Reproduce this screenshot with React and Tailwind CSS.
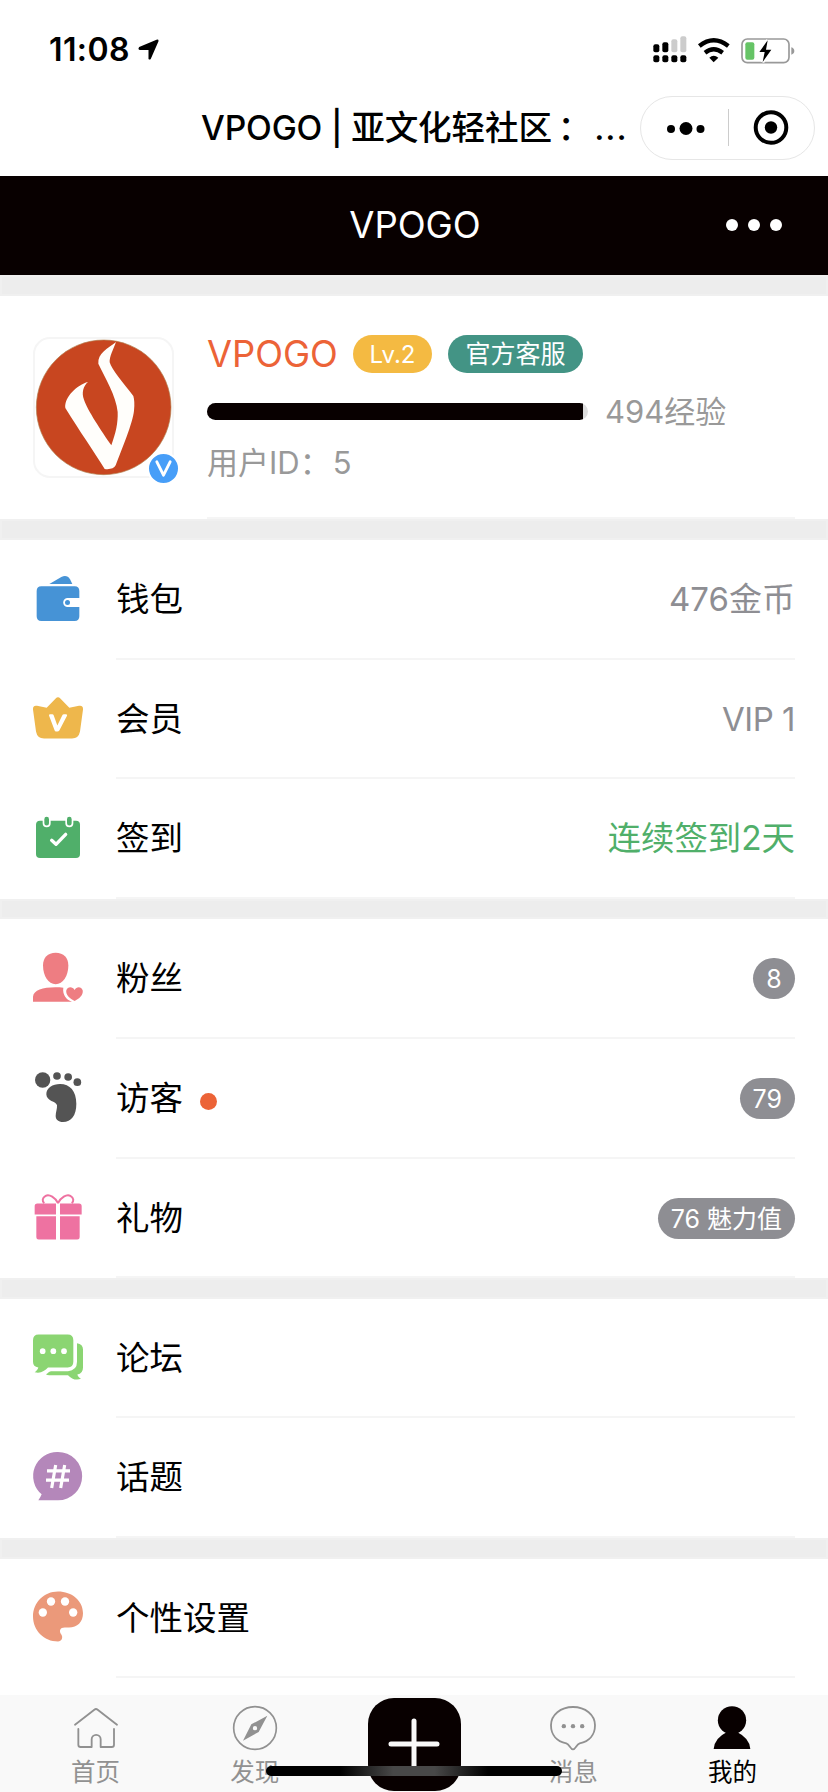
const WalletIcon = () => (
  <svg viewBox="99 102 150 150" className="size-[50px] overflow-visible" fill="#4693d6">
    <path d="M148 132 L184 111 Q201 103 210 118 L217 132 Z" />
    <path d="M124 139 H224 Q238 139 238 153 V174 H203 A13.5 13.5 0 0 0 203 201 H238 V229 Q238 243 224 243 H124 Q110 243 110 229 V153 Q110 139 124 139 Z" />
    <circle cx="202.500" cy="187.500" r="7.500" />
  </svg>
);

const CrownIcon = () => (
  <svg viewBox="99 460.5 150 150" className="size-[50px] overflow-visible">
    <path d="M167 474 Q174 467 181 474 L208 502 L237 496 Q250 494 249 507 L240 573 Q236 594 216 594 H132 Q112 594 108 573 L99 507 Q98 494 111 496 L140 502 Z" fill="#eeb74c" />
    <path d="M147 525 Q146 521 151 521 H157 Q160 521 161 524 L172 555 L187 524 Q188 521 192 521 H198 Q203 521 201 526 L178 570 Q176 573 172 573 H168 Q165 573 164 570 Z" fill="#fff" />
  </svg>
);

const CalendarIcon = () => (
  <svg viewBox="99 819 150 150" className="size-[50px] overflow-visible">
    <rect x="108" y="842" width="132" height="112" rx="12" fill="#50af6a" />
    <g fill="#50af6a" stroke="#fff" strokeWidth="5">
      <rect x="130.500" y="828" width="19" height="31" rx="9.500" />
      <rect x="198.500" y="828" width="19" height="31" rx="9.500" />
    </g>
    <path d="M155 901 L168 913 L197 883" fill="none" stroke="#fff" strokeWidth="10" strokeLinecap="round" strokeLinejoin="round" />
  </svg>
);

const FansIcon = () => (
  <svg viewBox="99 129 150 150" className="size-[50px] overflow-visible" fill="#ee7d82">
    <path d="M167 128 C191 128 205 143 205 166 C205 198 189 223 167 223 C145 223 129 198 129 166 C129 143 143 128 167 128 Z" />
    <path d="M99 275 V260 C101 241 128 232 166 232 C175 232 183 232 190 233 C187 253 198 269 216 275 Z" />
    <path d="M224 240 C229 229 244 228 248 241 C251 255 237 267 224 273 C210 267 196 254 199 241 C203 228 218 229 224 240 Z" />
  </svg>
);

const FootIcon = () => (
  <svg viewBox="99 489 150 150" className="size-[50px] overflow-visible" fill="#545454">
    <circle cx="128" cy="510" r="23" />
    <circle cx="171" cy="498" r="11.500" />
    <circle cx="204.500" cy="501" r="11.500" />
    <circle cx="232" cy="516.500" r="11.500" />
    <path d="M180 522 C210 522 229 543 229 581 C229 616 214 636 189 636 C175 636 167 629 167 618 C167 607 172 596 171 586 C169 574 139 574 139 553 C139 534 158 522 180 522 Z" />
  </svg>
);

const GiftIcon = () => (
  <svg viewBox="99 847.5 150 150" className="size-[50px] overflow-visible" fill="#ee72a1">
    <path d="M112 879 H168 V912 H104 V887 Q104 879 112 879 Z M180 879 H237 Q245 879 245 887 V912 H180 Z M109 917 H168 V987 H116 Q109 987 109 980 Z M180 917 H239 V980 Q239 987 232 987 H180 Z" />
    <path d="M174 878 C166 861 148 850 137 856 C126 862 126 873 133 878 M174 878 C182 861 200 850 211 856 C222 862 222 873 215 878" fill="none" stroke="#ee72a1" strokeWidth="6" />
  </svg>
);

const ForumIcon = () => (
  <svg viewBox="99 157.5 150 150" className="size-[50px] overflow-visible" fill="#8bd572">
    <path d="M116 162 H203 Q220 162 220 179 V244 Q220 261 203 261 H144 C134 271 122 280 104 275 C110 271 113 267 115 261 Q99 259 99 244 V179 Q99 162 116 162 Z" />
    <path d="M231 188 Q249 191 249 207 V261 Q249 279 232 282 C234 288 238 292 243 295 C229 301 214 295 204 284 H148 Q140 284 138 281 C144 278 146 273 153 272 H204 Q231 270 231 244 Z" />
    <g fill="#fff">
      <circle cx="128" cy="212" r="8.500" />
      <circle cx="160" cy="212" r="8.500" />
      <circle cx="192" cy="212" r="8.500" />
    </g>
  </svg>
);

const TopicIcon = () => (
  <svg viewBox="99 516 150 150" className="size-[50px] overflow-visible">
    <path d="M174 516 A72 72 0 0 1 174 661 H115 Q121 653 125 643 A72 72 0 0 1 174 516 Z" fill="#b487ba" />
    <path d="M167 555 L155 624 M194 555 L182 624 M141 572.500 H210 M138 600.500 H207" stroke="#fff" strokeWidth="9.500" fill="none" />
  </svg>
);

const PaletteIcon = () => (
  <svg viewBox="99 937.5 150 150" className="size-[50px] overflow-visible">
    <path d="M174 933 C216 933 249 961 249 998 C249 1024 232 1041 207 1041 H194 C180 1041 176 1052 184 1062 C190 1071 185 1083 174 1083 C132 1083 99 1050 99 1008 C99 966 132 933 174 933 Z" fill="#eb997a" />
    <g fill="#fff">
      <circle cx="153" cy="963" r="12.500" />
      <circle cx="195" cy="963" r="12.500" />
      <circle cx="128.500" cy="996" r="12.500" />
      <circle cx="219.500" cy="996" r="12.500" />
    </g>
  </svg>
);

const Pill = ({ children }) => (
  <span className="flex h-[41px] min-w-[42px] items-center justify-center rounded-full bg-[#8e8e93] px-[13px] pt-[2px] text-[25px] text-white">
    {children}
  </span>
);

const Row = ({ icon, label, dot, height, children }) => (
  <div className={`flex px-[33px] ${height}`}>
    <div className="flex w-[83px] items-center pb-[2px]">{icon}</div>
    <div className="flex flex-1 items-center border-b-2 border-[#f5f5f5]">
      <span className="pt-[2px] text-[33.500px] leading-none text-black">{label}</span>
      {dot && <span className="ml-[17px] mt-[7px] size-[17px] rounded-full bg-[#ec6337]" />}
      <span className="ml-auto flex items-center pt-px text-[33px] leading-none text-[#8e8e93]">{children}</span>
    </div>
  </div>
);

const Gap = ({ height = "h-[21px]" }) => <div className={`border-2 border-[#f0f0f0] bg-[#ededed] ${height}`} />;

const Tab = ({ label, active, children }) => (
  <div className={`flex flex-1 flex-col items-center pt-[10px] ${active ? "text-black" : "text-[#919191]"}`}>
    {children}
    <span className="mt-[7px] text-[24.500px] leading-[28px]">{label}</span>
  </div>
);

export default function App() {
  return (
    <div className="relative flex h-[1792px] w-[828px] flex-col overflow-hidden bg-white font-['Inter','Noto_Sans_CJK_SC',sans-serif] font-normal">
      <header className="h-[176px] shrink-0">
        <div className="flex h-[96px] items-center pl-[49px] pr-[33px] pt-[3px]">
          <span className="pt-px text-[32px] font-semibold leading-none tracking-[0.4px]">11:08</span>
          <svg viewBox="411 118 62 63" className="ml-[8px] h-[21px] w-[21px]">
            <path d="M414 142 L466 120 Q473 118 472 125 L449 177 Q446 182 442 178 V151 H416 Q409 149 414 142 Z" />
          </svg>
          <svg viewBox="716 104 426 84" className="ml-auto h-[28px] w-[142px]">
            <g fill="#ccc">
              <rect x="771" y="114" width="18" height="39" rx="6" />
              <rect x="798" y="105" width="18" height="48" rx="6" />
            </g>
            <rect x="717" y="129" width="18" height="24" rx="6" />
            <rect x="744" y="123" width="18" height="30" rx="6" />
            <rect x="717" y="162" width="18" height="21" rx="6" />
            <rect x="744" y="162" width="18" height="21" rx="6" />
            <rect x="771" y="162" width="18" height="21" rx="6" />
            <rect x="798" y="162" width="18" height="21" rx="6" />
            <path d="M855 134 Q898 100 942 134" fill="none" stroke="#000" strokeWidth="13" />
            <path d="M872 154 Q898 134 925 154" fill="none" stroke="#000" strokeWidth="13" />
            <path d="M885 169 Q898 158 912 169 L898 183 Z" />
            <rect x="983" y="113" width="141" height="71" rx="16" fill="none" stroke="#999" strokeWidth="5" />
            <rect x="993" y="123" width="27" height="52" rx="6" fill="#66c466" />
            <path d="M1131 138 Q1140 141 1140 149 Q1140 157 1131 160 Z" fill="#999" />
            <path d="M1060 117 L1035 152 H1051 L1045 182 L1071 145 H1055 Z" stroke="#fff" strokeWidth="10" />
            <path d="M1060 117 L1035 152 H1051 L1045 182 L1071 145 H1055 Z" />
          </svg>
        </div>
        <div className="flex h-[64px] items-center pl-[201px] pr-[13px]">
          <span className="whitespace-nowrap text-[33.600px] font-medium leading-none tracking-[-0.150px]">
            VPOGO | 亚文化轻社区<span className="ml-[6px]">：</span><span className="ml-[3px] tracking-[0.9px]">...</span>
          </span>
          <div className="ml-auto flex h-[64px] w-[175px] shrink-0 items-center rounded-full border border-[#e6e6e6]">
            <svg viewBox="0 0 172 62" className="h-[62px] w-[172px]">
              <circle cx="30" cy="32" r="4" />
              <circle cx="45" cy="31.500" r="6.500" />
              <circle cx="59.500" cy="32" r="4" />
              <rect x="87" y="12" width="1" height="37" fill="#ccc" />
              <circle cx="130" cy="30.500" r="15.300" fill="none" stroke="#000" strokeWidth="4" />
              <circle cx="130" cy="30.500" r="6.200" />
            </svg>
          </div>
        </div>
      </header>

      <nav className="flex h-[99px] shrink-0 items-center bg-[#080000] pl-[129px] pr-[46px] text-white">
        <span className="flex-1 text-center text-[36.500px] leading-none">VPOGO</span>
        <div className="ml-[25px] flex gap-[10px] pb-[2px]">
          <span className="size-[12px] rounded-full bg-white" />
          <span className="size-[12px] rounded-full bg-white" />
          <span className="size-[12px] rounded-full bg-white" />
        </div>
      </nav>
      <Gap />

      <section className="flex h-[223px] shrink-0 px-[33px]">
        <div className="relative mt-[41px] size-[141px] rounded-[17px] border-2 border-[#f5f5f5]">
          <svg viewBox="105 147 411 411" className="size-[137px]">
            <circle cx="311" cy="352" r="202" fill="#c84620" stroke="#b08050" strokeWidth="2" />
            <path d="M348 156 C340 178 328 200 329 217 C335 238 370 280 400 318 Q405 335 402 362 C398 400 366 475 347 526 Q339 540 314 537 C282 485 240 425 196 354 C192 322 232 284 264 276 C250 288 244 308 252 329 C262 360 304 422 334 466 C348 426 354 400 353 366 C349 318 314 262 295 221 C293 190 322 176 348 156 Z" fill="#fffefb" />
          </svg>
          <span className="absolute left-[112px] top-[113px] flex size-[33px] items-center justify-center rounded-full border-2 border-white bg-[#479ef8]">
            <svg viewBox="0 0 20 20" className="size-[19px]">
              <path d="M3 3 L10 17 L17 3" fill="none" stroke="#fff" strokeWidth="3" strokeLinejoin="round" strokeLinecap="round" />
            </svg>
          </span>
        </div>
        <div className="ml-[33px] flex-1 border-b-2 border-[#f5f5f5] pt-[39px]">
          <div className="flex h-[38px] items-center">
            <span className="w-[146px] text-[36.300px] leading-none text-[#ec6337]">VPOGO</span>
            <span className="flex h-[38px] w-[79px] items-center justify-center rounded-full bg-[#f4ba42] pt-[2px] text-[24px] text-white">Lv.2</span>
            <span className="ml-[16px] flex h-[38px] w-[135px] items-center justify-center rounded-full bg-[#439485] pt-[2px] text-[25px] text-white">官方客服</span>
          </div>
          <div className="mt-[19px] flex h-[38px] items-center text-[31px] leading-none text-[#999]">
            <div className="h-[17px] w-[381px] overflow-hidden rounded-full bg-[#ddd]">
              <div className="h-full w-[376px] bg-[#080000]" />
            </div>
            <span className="ml-[17px]">494经验</span>
          </div>
          <div className="mt-[17px] text-[31px] leading-[32px] text-[#999]">用户ID：<span className="ml-[2px]">5</span></div>
        </div>
      </section>
      <Gap />

      <section className="shrink-0">
        <Row icon={<WalletIcon />} label="钱包" height="h-[120px]">476金币</Row>
        <Row icon={<CrownIcon />} label="会员" height="h-[119px]"><span className="tracking-[-0.500px]">VIP 1</span></Row>
        <Row icon={<CalendarIcon />} label="签到" height="h-[120px]"><span className="text-[33.400px] text-[#50af6a]">连续签到2天</span></Row>
      </section>
      <Gap height="h-[20px]" />

      <section className="shrink-0">
        <Row icon={<FansIcon />} label="粉丝" height="h-[120px]"><Pill>8</Pill></Row>
        <Row icon={<FootIcon />} label="访客" dot height="h-[120px]"><Pill>79</Pill></Row>
        <Row icon={<GiftIcon />} label="礼物" height="h-[119px]"><Pill>76 魅力值</Pill></Row>
      </section>
      <Gap />

      <section className="shrink-0">
        <Row icon={<ForumIcon />} label="论坛" height="h-[119px]" />
        <Row icon={<TopicIcon />} label="话题" height="h-[120px]" />
      </section>
      <Gap />

      <section className="h-[136px] shrink-0">
        <Row icon={<PaletteIcon />} label="个性设置" height="h-[119px]" />
      </section>

      <footer className="flex h-[97px] shrink-0 bg-[#f9f9f9] px-[16px]">
        <Tab label="首页">
          <svg viewBox="219 135 138 138" className="size-[46px]" fill="none" stroke="#919191" strokeWidth="5.500" strokeLinecap="round" strokeLinejoin="round">
            <path d="M225 194 L283 149 Q288 145 293 149 L351 194 M235 207 V254 Q235 261 242 261 H275 V238 A13.500 13.500 0 0 1 302 238 V261 H335 Q342 261 342 254 V207" />
          </svg>
        </Tab>
        <Tab label="发现">
          <svg viewBox="696 135 138 138" className="size-[46px]">
            <circle cx="765" cy="204" r="64" fill="none" stroke="#919191" strokeWidth="5" />
            <path fillRule="evenodd" d="M802 167 L776 216 L729 242 L754 193 Z M765 198 A6.500 6.500 0 1 0 765 211 A6.500 6.500 0 1 0 765 198 Z" fill="#919191" />
          </svg>
        </Tab>
        <div className="flex flex-1 justify-center pt-[3px]">
          <div className="flex size-[93px] items-center justify-center rounded-[26px] bg-[#080000] pb-[2px]">
            <svg viewBox="0 0 52 52" className="size-[52px]" stroke="#f9f9f9" strokeWidth="5" strokeLinecap="round">
              <path d="M3 26 H49 M26 3 V49" />
            </svg>
          </div>
        </div>
        <Tab label="消息">
          <svg viewBox="408 135 138 138" className="size-[46px]">
            <path d="M477 141 C514 141 543 165 543 196 C543 224 526 244 497 250 C487 253 485 268 477 268 C469 268 467 253 457 250 C428 244 411 224 411 196 C411 165 440 141 477 141 Z" fill="none" stroke="#919191" strokeWidth="5.500" />
            <g fill="#919191">
              <circle cx="449.500" cy="198.500" r="6.500" />
              <circle cx="477" cy="198.500" r="6.500" />
              <circle cx="504.500" cy="198.500" r="6.500" />
            </g>
          </svg>
        </Tab>
        <Tab label="我的" active>
          <svg viewBox="885 135 138 138" className="size-[46px]" fill="#080000">
            <circle cx="954" cy="181" r="42.500" />
            <path d="M899 267 Q902 234 938 217 H970 Q1006 234 1009 267 Z" />
          </svg>
        </Tab>
      </footer>

      <div className="absolute left-[266px] top-[1766px] h-[10px] w-[296px] rounded-full bg-[linear-gradient(90deg,#000_0%,#000_25%,#484848_43%,#484848_57%,#000_75%,#000_100%)]" />
    </div>
  );
}
